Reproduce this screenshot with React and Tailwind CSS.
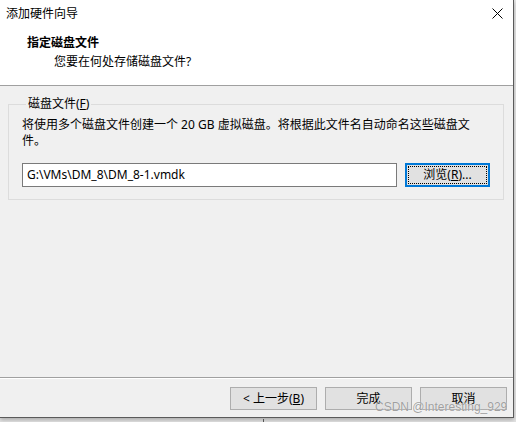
import React from "react";

const font = { fontFamily: '"Noto Sans", "Noto Sans CJK SC", sans-serif' };

const Btn = ({ children, focused }) => {
  if (focused) {
    return (
      <button className="w-[85px] h-[24px] border-2 border-[#0078d7] bg-[#e1e1e1] p-[1px] text-[12px] leading-[16px] text-black">
        <div className="w-full h-full border border-dotted border-black flex items-center justify-center">
          {children}
        </div>
      </button>
    );
  }
  return (
    <button className="w-[87px] h-[23px] border border-[#adadad] bg-[#e1e1e1] text-[12px] leading-[16px] text-black flex items-center justify-center">
      {children}
    </button>
  );
};

const App = () => {
  return (
    <div className="w-[516px] h-[422px] relative overflow-hidden bg-[#e4e4e4]" style={font}>
      <div className="w-[514px] h-[418px] flex flex-col border-r border-b border-[#5a5a5a] bg-[#f0f0f0] shadow-[0_2px_4px_rgba(0,0,0,0.25)]">
        {/* header */}
        <div className="h-[86px] bg-white border-b border-[#a0a0a0] shrink-0">
          <div className="h-[27px] flex items-center justify-between pl-[6px] pr-[10px]">
            <span className="text-[12px] leading-[16px] text-black">添加硬件向导</span>
            <svg width="11" height="11" viewBox="0 0 11 11" className="mb-[1px]">
              <path d="M0.5 0.5L10.5 10.5M10.5 0.5L0.5 10.5" stroke="#000" strokeWidth="1" fill="none" />
            </svg>
          </div>
          <div className="pl-[27px] mt-[8px] text-[12px] leading-[16px] font-bold text-black">指定磁盘文件</div>
          <div className="pl-[54px] mt-[1px] text-[12px] leading-[20px] text-black">您要在何处存储磁盘文件?</div>
        </div>

        {/* body */}
        <div className="flex-1 flex flex-col">
          <fieldset className="mt-[10px] ml-[8px] w-[496px] border border-[#dcdcdc] pl-[13px] pr-[10px] pb-[12px]">
            <legend className="ml-[4px] px-[2px] text-[12px] leading-[16px] text-black">
              磁盘文件(<span className="underline">F</span>)
            </legend>
            <div className="pt-[5px] text-[12px] leading-[16px] text-black">
              将使用多个磁盘文件创建一个 20 GB 虚拟磁盘。将根据此文件名自动命名这些磁盘文
              <br />
              件。
            </div>
            <div className="mt-[14px] flex items-center gap-[8px]">
              <div className="w-[375px] h-[24px] border border-[#7a7a7a] bg-white flex items-center pl-[4px] text-[12px] text-black">
                G:\VMs\DM_8\DM_8-1.vmdk
              </div>
              <Btn focused>
                浏览(<span className="underline">R</span>)...
              </Btn>
            </div>
          </fieldset>
        </div>

        {/* footer */}
        <div className="shrink-0 border-t border-[#a0a0a0]">
          <div className="h-px bg-white" />
          <div className="flex justify-end gap-[8px] pr-[6px] pt-[8px] pb-[7px]">
            <Btn>
              &lt; 上一步(<span className="underline">B</span>)
            </Btn>
            <Btn>完成</Btn>
            <Btn>取消</Btn>
          </div>
        </div>
      </div>

      <div className="absolute left-[263px] top-[419px] w-px h-[3px] bg-[#555]" />

      <div
        className="absolute left-[375px] top-[399px] whitespace-nowrap text-[12px] leading-[16px] text-[rgba(130,130,130,0.75)] [text-shadow:0_0_1px_rgba(255,255,255,0.9)]"
        style={{ fontFamily: '"Liberation Sans", sans-serif' }}
      >
        CSDN @Interesting_929
      </div>
    </div>
  );
};

export default App;
